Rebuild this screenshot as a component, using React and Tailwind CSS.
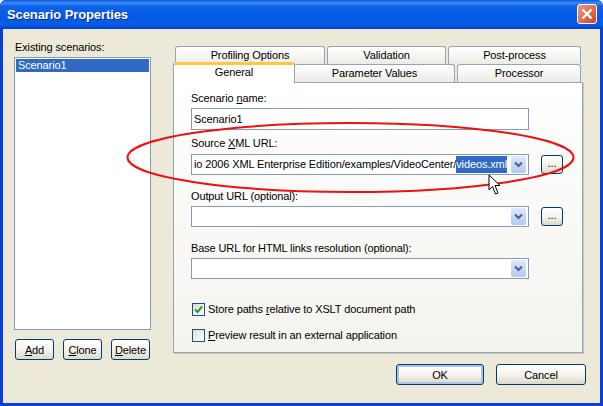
const font = { fontFamily: '"Liberation Sans",Arial,sans-serif' };

function U({ children }) {
  return <span className="underline underline-offset-1">{children}</span>;
}

function XpButton({ className, children, focused }) {
  return (
    <button
      className={
        "flex items-center justify-center rounded-[3px] border border-[#003c74] bg-gradient-to-b from-white via-[#f5f4ee] to-[#dcd8ca] pt-[1px] text-[11px] tracking-[-0.12px] text-black " +
        (focused ? "shadow-[inset_0_0_0_2px_#a9c3ea] " : "") +
        className
      }
    >
      {children}
    </button>
  );
}

function Tab({ className, children }) {
  return (
    <div
      className={
        "flex h-[18px] items-center justify-center rounded-t-[3px] border border-b-0 border-[#91a7b4] bg-gradient-to-b from-white to-[#ecebe5] text-[11px] leading-none tracking-[-0.12px] text-black " +
        className
      }
    >
      {children}
    </div>
  );
}

function Combo({ children }) {
  return (
    <div className="flex h-[21px] w-[338px] items-center justify-between overflow-hidden border border-[#7f9db9] bg-white pr-[2px]">
      <div className="flex min-w-0 flex-1 items-center overflow-hidden whitespace-nowrap pl-[2px] text-black">
        {children}
      </div>
      <div className="flex h-[17px] w-[15px] shrink-0 items-center justify-center rounded-[2px] bg-gradient-to-b from-[#dfe8fb] to-[#b3c8f5]">
        <svg width="9" height="7" viewBox="0 0 9 7">
          <path d="M1 1.5 L4.5 5 L8 1.5" fill="none" stroke="#4d6185" strokeWidth="2" />
        </svg>
      </div>
    </div>
  );
}

function Browse() {
  return (
    <XpButton className="ml-[12px] h-[19px] w-[22px] pb-[3px]">...</XpButton>
  );
}

function CheckBox({ checked }) {
  return (
    <span className="flex h-[13px] w-[13px] items-center justify-center border border-[#1c5180] bg-gradient-to-br from-[#dcdcd7] to-white">
      {checked && (
        <svg width="9" height="9" viewBox="0 0 9 9">
          <path d="M1 4.5 L3.5 7 L8 1.5" fill="none" stroke="#21a121" strokeWidth="2" />
        </svg>
      )}
    </span>
  );
}

export default function App() {
  return (
    <div
      className="relative flex h-[406px] w-[603px] flex-col overflow-hidden rounded-t-[6px] bg-[#0a3fdc] text-[11px] tracking-[-0.12px] text-black"
      style={font}
    >
      {/* Title bar */}
      <div className="flex h-[29px] shrink-0 items-center justify-between bg-[linear-gradient(to_bottom,#0a5ae6_0%,#3a8cf2_10%,#0e63ea_22%,#0559e6_60%,#0a5ce8_85%,#0340c8_100%)] pl-[7px] pr-[6px]">
        <span className="text-[13px] font-bold tracking-[-0.1px] text-white [text-shadow:1px_1px_0_#0b2f9f]">Scenario Properties</span>
        <div className="mt-[-2px] flex h-[20px] w-[20px] items-center justify-center rounded-[3px] border border-white bg-gradient-to-br from-[#ea9a80] to-[#d0401c]">
          <svg width="12" height="12" viewBox="0 0 12 12">
            <path d="M1.5 1.5 L10.5 10.5 M10.5 1.5 L1.5 10.5" stroke="white" strokeWidth="2.4" />
          </svg>
        </div>
      </div>

      {/* Body */}
      <div className="mx-[3px] mb-[3px] flex flex-1 bg-[#ece9d8] pl-[11px] pt-[10px]">
        {/* Left column */}
        <div className="flex w-[137px] shrink-0 flex-col">
          <div className="h-[18px] pl-[1px] leading-[16px]">Existing scenarios:</div>
          <div className="h-[273px] border border-[#7f9db9] bg-white p-[1px]">
            <div className="flex h-[13px] items-center bg-[#316ac5] pl-[2px] text-white">Scenario1</div>
          </div>
          <div className="mt-[9px] flex justify-between px-[1px]">
            <XpButton className="h-[21px] w-[39px]"><span><U>A</U>dd</span></XpButton>
            <XpButton className="h-[21px] w-[39px]"><span><U>C</U>lone</span></XpButton>
            <XpButton className="h-[21px] w-[39px]"><span><U>D</U>elete</span></XpButton>
          </div>
        </div>

        {/* Right column */}
        <div className="ml-[22px] flex w-[410px] shrink-0 flex-col pt-[7px]">
          <div className="flex gap-[2px] pl-[2px] pr-[2px]">
            <Tab className="w-[150px]">Profiling Options</Tab>
            <Tab className="w-[119px]">Validation</Tab>
            <Tab className="w-[133px]">Post-process</Tab>
          </div>
          <div className="flex pr-[2px]">
            <div className="z-10 -mt-[2px] mb-[-1px] flex h-[21px] w-[122px] flex-col rounded-t-[3px] border-x border-[#91a7b4] bg-white">
              <div className="h-[3px] rounded-t-[3px] bg-[#ffc73c]" />
              <div className="flex-1 text-center leading-[15px]">General</div>
            </div>
            <Tab className="w-[160px] border-l-0">Parameter Values</Tab>
            <Tab className="ml-[2px] w-[124px]">Processor</Tab>
          </div>

          {/* Panel */}
          <div className="flex h-[271px] flex-col border border-[#91a7b4] bg-gradient-to-b from-white to-[#f4f3ee] pl-[17px] pt-[8px] shadow-[1px_1px_0_#c9c7ba]">
            <div className="h-[17px] leading-[15px]">Scenario <U>n</U>ame:</div>
            <div className="flex h-[22px] w-[338px] items-center border border-[#7f9db9] bg-white pl-[2px]">Scenario1</div>

            <div className="mt-[6px] h-[18px] leading-[15px]">Source <U>X</U>ML URL:</div>
            <div className="flex items-center">
              <Combo>
                <span>io 2006 XML Enterprise Edition/examples/VideoCenter/</span>
                <span className="bg-[#316ac5] text-white">videos.xml</span>
              </Combo>
              <Browse />
            </div>

            <div className="mt-[14px] h-[17px] leading-[15px]">Output URL (optional):</div>
            <div className="flex items-center">
              <Combo />
              <Browse />
            </div>

            <div className="mt-[14px] h-[17px] leading-[15px]">Base URL for HTML links resolution (optional):</div>
            <Combo />

            <div className="mt-[24px] flex h-[13px] items-center gap-[3px] pl-[1px]">
              <CheckBox checked />
              <span>Store paths <U>r</U>elative to XSLT document path</span>
            </div>
            <div className="mt-[13px] flex h-[13px] items-center gap-[3px] pl-[1px]">
              <CheckBox />
              <span><U>P</U>review result in an external application</span>
            </div>
          </div>

          <div className="mt-[11px] flex justify-end">
            <XpButton focused className="h-[21px] w-[88px]">OK</XpButton>
            <XpButton className="ml-[12px] mr-[-3px] h-[21px] w-[90px]">Cancel</XpButton>
          </div>
        </div>
      </div>

      {/* Red annotation ellipse */}
      <svg className="pointer-events-none absolute left-0 top-0" width="603" height="406" viewBox="0 0 603 406">
        <ellipse cx="350.5" cy="157.5" rx="223" ry="34.5" fill="none" stroke="#f01010" strokeWidth="2" />
      </svg>

      {/* Mouse cursor */}
      <svg className="pointer-events-none absolute left-[488px] top-[174px]" width="14" height="22" viewBox="0 0 14 22">
        <path d="M1 1 L1 16 L4.5 12.5 L7.5 20 L10 19 L7 11.5 L12 11.5 Z" fill="white" stroke="black" strokeWidth="1" />
      </svg>
    </div>
  );
}
